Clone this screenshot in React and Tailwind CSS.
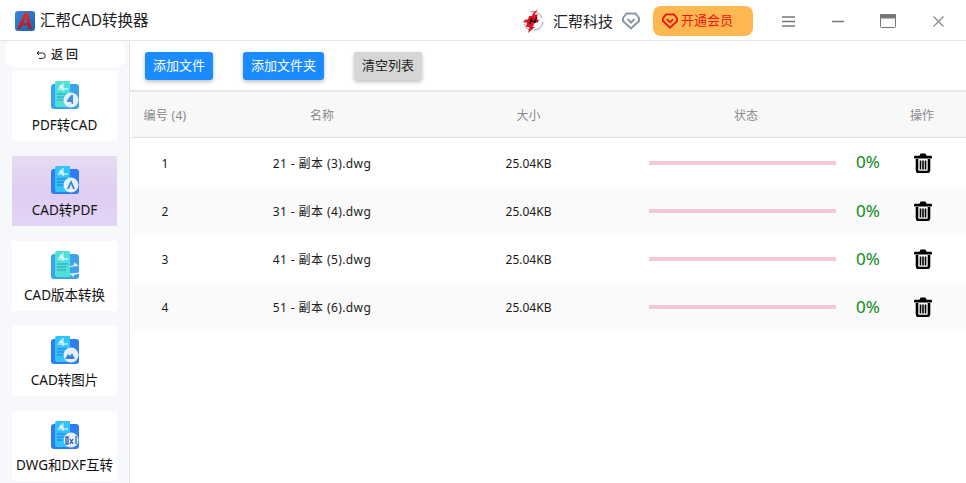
const font = "[font-family:'Noto_Sans','Noto_Sans_CJK_SC',sans-serif]";

const navItems = [
  { label: "PDF转CAD", kind: "pdf2cad" },
  { label: "CAD转PDF", kind: "cad2pdf", active: true },
  { label: "CAD版本转换", kind: "version" },
  { label: "CAD转图片", kind: "image" },
  { label: "DWG和DXF互转", kind: "dxf" },
];

const rows = [
  { id: 1, name: "21 - 副本 (3).dwg" },
  { id: 2, name: "31 - 副本 (4).dwg" },
  { id: 3, name: "41 - 副本 (5).dwg" },
  { id: 4, name: "51 - 副本 (6).dwg" },
];

const AppLogo = () => (
  <svg width="20" height="20" viewBox="0 0 20 20">
    <defs>
      <linearGradient id="logoBg" x1="0" y1="0" x2="1" y2="1">
        <stop offset="0" stopColor="#3a8ad8" />
        <stop offset="1" stopColor="#1c5fae" />
      </linearGradient>
      <linearGradient id="logoA" x1="0" y1="0" x2="0" y2="1">
        <stop offset="0" stopColor="#d8333a" />
        <stop offset="1" stopColor="#a81c28" />
      </linearGradient>
    </defs>
    <rect width="20" height="20" rx="3" fill="url(#logoBg)" />
    <path d="M9.500 1.500h3.500l4 16.500h-3.400l-.8-3.800H8L5.200 18H2z" fill="url(#logoA)" />
    <path d="M10.700 6L9 11.800h2.900z" fill="#2f7fd0" />
  </svg>
);

const NavIcon = ({ kind }) => {
  const teal = kind === "pdf2cad" || kind === "version";
  const back = teal ? "#3ba2ee" : "#2f7df0";
  const front = teal ? "#4fe0d8" : "#30c4f8";
  const lines = teal ? "#2aa0c8" : "#2f6fe0";
  return (
    <svg width="28" height="28" viewBox="0 0 28 28">
      <rect x="0" y="3" width="28" height="25" rx="3" fill={back} />
      <path d="M6 0h13v26H6a2 2 0 0 1-2-2V2a2 2 0 0 1 2-2z" fill={front} />
      <path d="M12 2v8M7 8h10" stroke="#fff" strokeWidth="1" />
      <path d="M8 7l2-4 2 4z" fill="#fff" />
      <path d="M6 13h11M6 16h9M6 19h9" stroke={lines} strokeWidth="1" />
      {kind === "version" ? (
        <g fill="#dcecfb">
          <path d="M18 15c2 0 4-.500 5-1.500v-2.500l5 4-9 1z" />
          <path d="M28 23c-2 0-4 .500-5 1.500v2l-5-4 10-1z" />
        </g>
      ) : (
        <>
          <circle cx="20" cy="19" r="7.500" fill="#e6f0fb" />
          {kind === "pdf2cad" && <path d="M22 14v9h-1.500v-2H16v-1.500l4-5.500z" fill="#3b8fe0" />}
          {kind === "cad2pdf" && <path d="M20 14l4 9h-2l-2-5-2 5h-2z" fill="#3b7fe0" />}
          {kind === "image" && <path d="M14 23l3-5 2 2 2-3 3 6z" fill="#3b7fe0" />}
          {kind === "dxf" && <path d="M15 16h2v7h-2zM19 18l3 5M22 18l-3 5M25 15v8" stroke="#2b5fb0" strokeWidth="1.300" fill="none" />}
        </>
      )}
    </svg>
  );
};

const BrandMark = () => (
  <svg width="22" height="24" viewBox="0 0 22 24">
    <g stroke="#8a9498" strokeWidth="0.900" fill="none">
      <path d="M8 3a9 9 0 0 1 12 6M21 13a9 9 0 0 1-9 8M2 15a9 9 0 0 0 5 6" />
    </g>
    <path d="M16 0L12.500 5.500H16l-2 5h3l-1 3h-3l-2.500 4.500H13L6 24l1.500-6H4l1-4.500H1l2-3h3l1-3.500h3l1-3z" fill="#e5121f" />
    <path d="M9 9h1.500l-2 6H7zM14 8h1.500l-2 6H12zM8 11.500h6v1.200H8z" fill="#111" />
  </svg>
);

const Gem = ({ color, width = 18, height = 18, stroke = 2 }) => (
  <svg width={width} height={height} viewBox="0 0 18 18" fill="none" stroke={color} strokeWidth={stroke} strokeLinejoin="miter">
    <path d="M4.500 1.500h9L17 6v3l-8 7.500L1 9V6z" />
    <path d="M5.500 7l3.500 3.500L12.500 7" />
  </svg>
);

const Trash = () => (
  <svg width="18" height="20" viewBox="0 0 18 20">
    <path d="M6.500 0.500h5l1 2.300H17a1.200 1.200 0 0 1 0 2.700H1a1.200 1.200 0 0 1 0-2.700h4.500z" fill="#000" />
    <path d="M3 6v11a2 2 0 0 0 2 2h8a2 2 0 0 0 2-2V6" fill="none" stroke="#000" strokeWidth="2.600" />
    <path d="M6.500 7.500v9M9 7.500v9M11.500 7.500v9" stroke="#000" strokeWidth="1.600" />
  </svg>
);

const Button = ({ children, className }) => (
  <button className={`h-7 rounded-[3px] text-[13px] shadow-[0_2px_4px_rgba(0,0,0,0.25)] ${className}`}>
    {children}
  </button>
);

export default function App() {
  return (
    <div className={`${font} w-[966px] h-[483px] overflow-hidden bg-white flex flex-col`}>
      <header className="h-[41px] shrink-0 flex items-center border-b border-[#e6e6e6] pl-[15px] pt-[2px]">
        <AppLogo />
        <span className="ml-[5px] text-[15.500px] text-[#222]">汇帮CAD转换器</span>
        <div className="ml-auto flex items-center">
          <BrandMark />
          <span className="ml-[9px] text-[15px] text-[#222]">汇帮科技</span>
          <span className="ml-[9px] flex">
            <Gem color="#8b979f" />
          </span>
          <div className="ml-[13px] w-[100px] h-[30px] rounded-lg bg-[#ffb84f] flex items-center pl-[9px] gap-[3px] text-[13px] text-[#f01414]">
            <Gem color="#f01414" width={16} height={16} />
            开通会员
          </div>
          <svg className="ml-[29px]" width="13" height="11" viewBox="0 0 13 11" stroke="#777" strokeWidth="1.500">
            <path d="M0 1h13M0 5.500h13M0 10h13" />
          </svg>
          <svg className="ml-[37px]" width="12" height="3" viewBox="0 0 12 3" stroke="#777" strokeWidth="1.500">
            <path d="M0 1.500h12" />
          </svg>
          <svg className="ml-[36px]" width="16" height="14" viewBox="0 0 16 14" fill="none" stroke="#777">
            <rect x="0.500" y="0.500" width="15" height="13" rx="1" />
            <rect x="0.500" y="0.500" width="15" height="3.500" fill="#777" />
          </svg>
          <svg className="ml-[37px] mr-[22px]" width="11" height="11" viewBox="0 0 11 11" stroke="#888" strokeWidth="1.200">
            <path d="M0.500 0.500l10 10M10.500 0.500l-10 10" />
          </svg>
        </div>
      </header>

      <div className="flex-1 flex min-h-0">
        <aside className="w-[130px] shrink-0 bg-[#f6f8fc] border-r border-[#e6e6e6] flex flex-col items-center">
          <div className="w-[120px] h-[26px] pt-[2px] rounded-lg bg-white flex items-center justify-center gap-[5px] pr-[15px] text-xs font-medium text-[#222]">
            <svg width="10" height="10" viewBox="0 0 10 10" fill="none" stroke="#222" strokeWidth="1">
              <path d="M3 1L1 3l2 2M1 3h5.500a2.500 2.500 0 0 1 0 5.500H3" />
            </svg>
            返 回
          </div>
          <nav className="mt-[4px] flex flex-col gap-[15px]">
            {navItems.map((item) => (
              <div
                key={item.kind}
                className={`w-[105px] h-[70px] flex flex-col items-center pt-[10px] ${
                  item.active ? "bg-gradient-to-b from-[#e8dcf2] via-[#dfcdf3] to-[#e4d4f5]" : "bg-white"
                }`}
              >
                <NavIcon kind={item.kind} />
                <span className="mt-[6px] text-[13.500px] leading-[20px] text-[#111] whitespace-nowrap">{item.label}</span>
              </div>
            ))}
          </nav>
        </aside>

        <main className="flex-1 min-w-0 flex flex-col">
          <div className="h-[49px] shrink-0 flex items-center pl-[15px] gap-[30px]">
            <Button className="w-[68px] bg-[#1a8cff] text-white">添加文件</Button>
            <Button className="w-[81px] bg-[#1a8cff] text-white">添加文件夹</Button>
            <Button className="w-[68px] bg-[#d6d6d6] text-[#222]">清空列表</Button>
          </div>
          <div className="h-[2px] bg-[#e6e6e6]" />
          <div className="pl-[2px]">
            <div className="h-[46px] pt-[2px] bg-[#f8f8f8] border-b border-[#e3e3e3] grid grid-cols-[66px_248px_164px_272px_80px] items-center text-xs text-[#888] text-center">
              <span className="tracking-[0.3px]">编号 (4)</span>
              <span>名称</span>
              <span className="pl-[1px]">大小</span>
              <span>状态</span>
              <span>操作</span>
            </div>
            <div>
              {rows.map((row) => (
                <div
                  key={row.id}
                  className="h-12 first:h-[49px] pt-[2px] even:bg-[#fafafa] grid grid-cols-[66px_248px_164px_272px_80px] items-center text-xs text-[#1a1a1a] text-center"
                >
                  <span>{row.id}</span>
                  <span className="tracking-[0.4px]">{row.name}</span>
                  <span className="pl-[1px]">{row.size ?? "25.04KB"}</span>
                  <div className="flex items-center pl-[39px] mb-[2px]">
                    <div className="w-[187px] shrink-0 h-1 bg-[#f7c6d8]" />
                    <span className="ml-[20px] text-[17px] text-[#0a8a14]">0%</span>
                  </div>
                  <div className="flex justify-center pl-[1px] mb-[2px]">
                    <Trash />
                  </div>
                </div>
              ))}
            </div>
          </div>
        </main>
      </div>
    </div>
  );
}
